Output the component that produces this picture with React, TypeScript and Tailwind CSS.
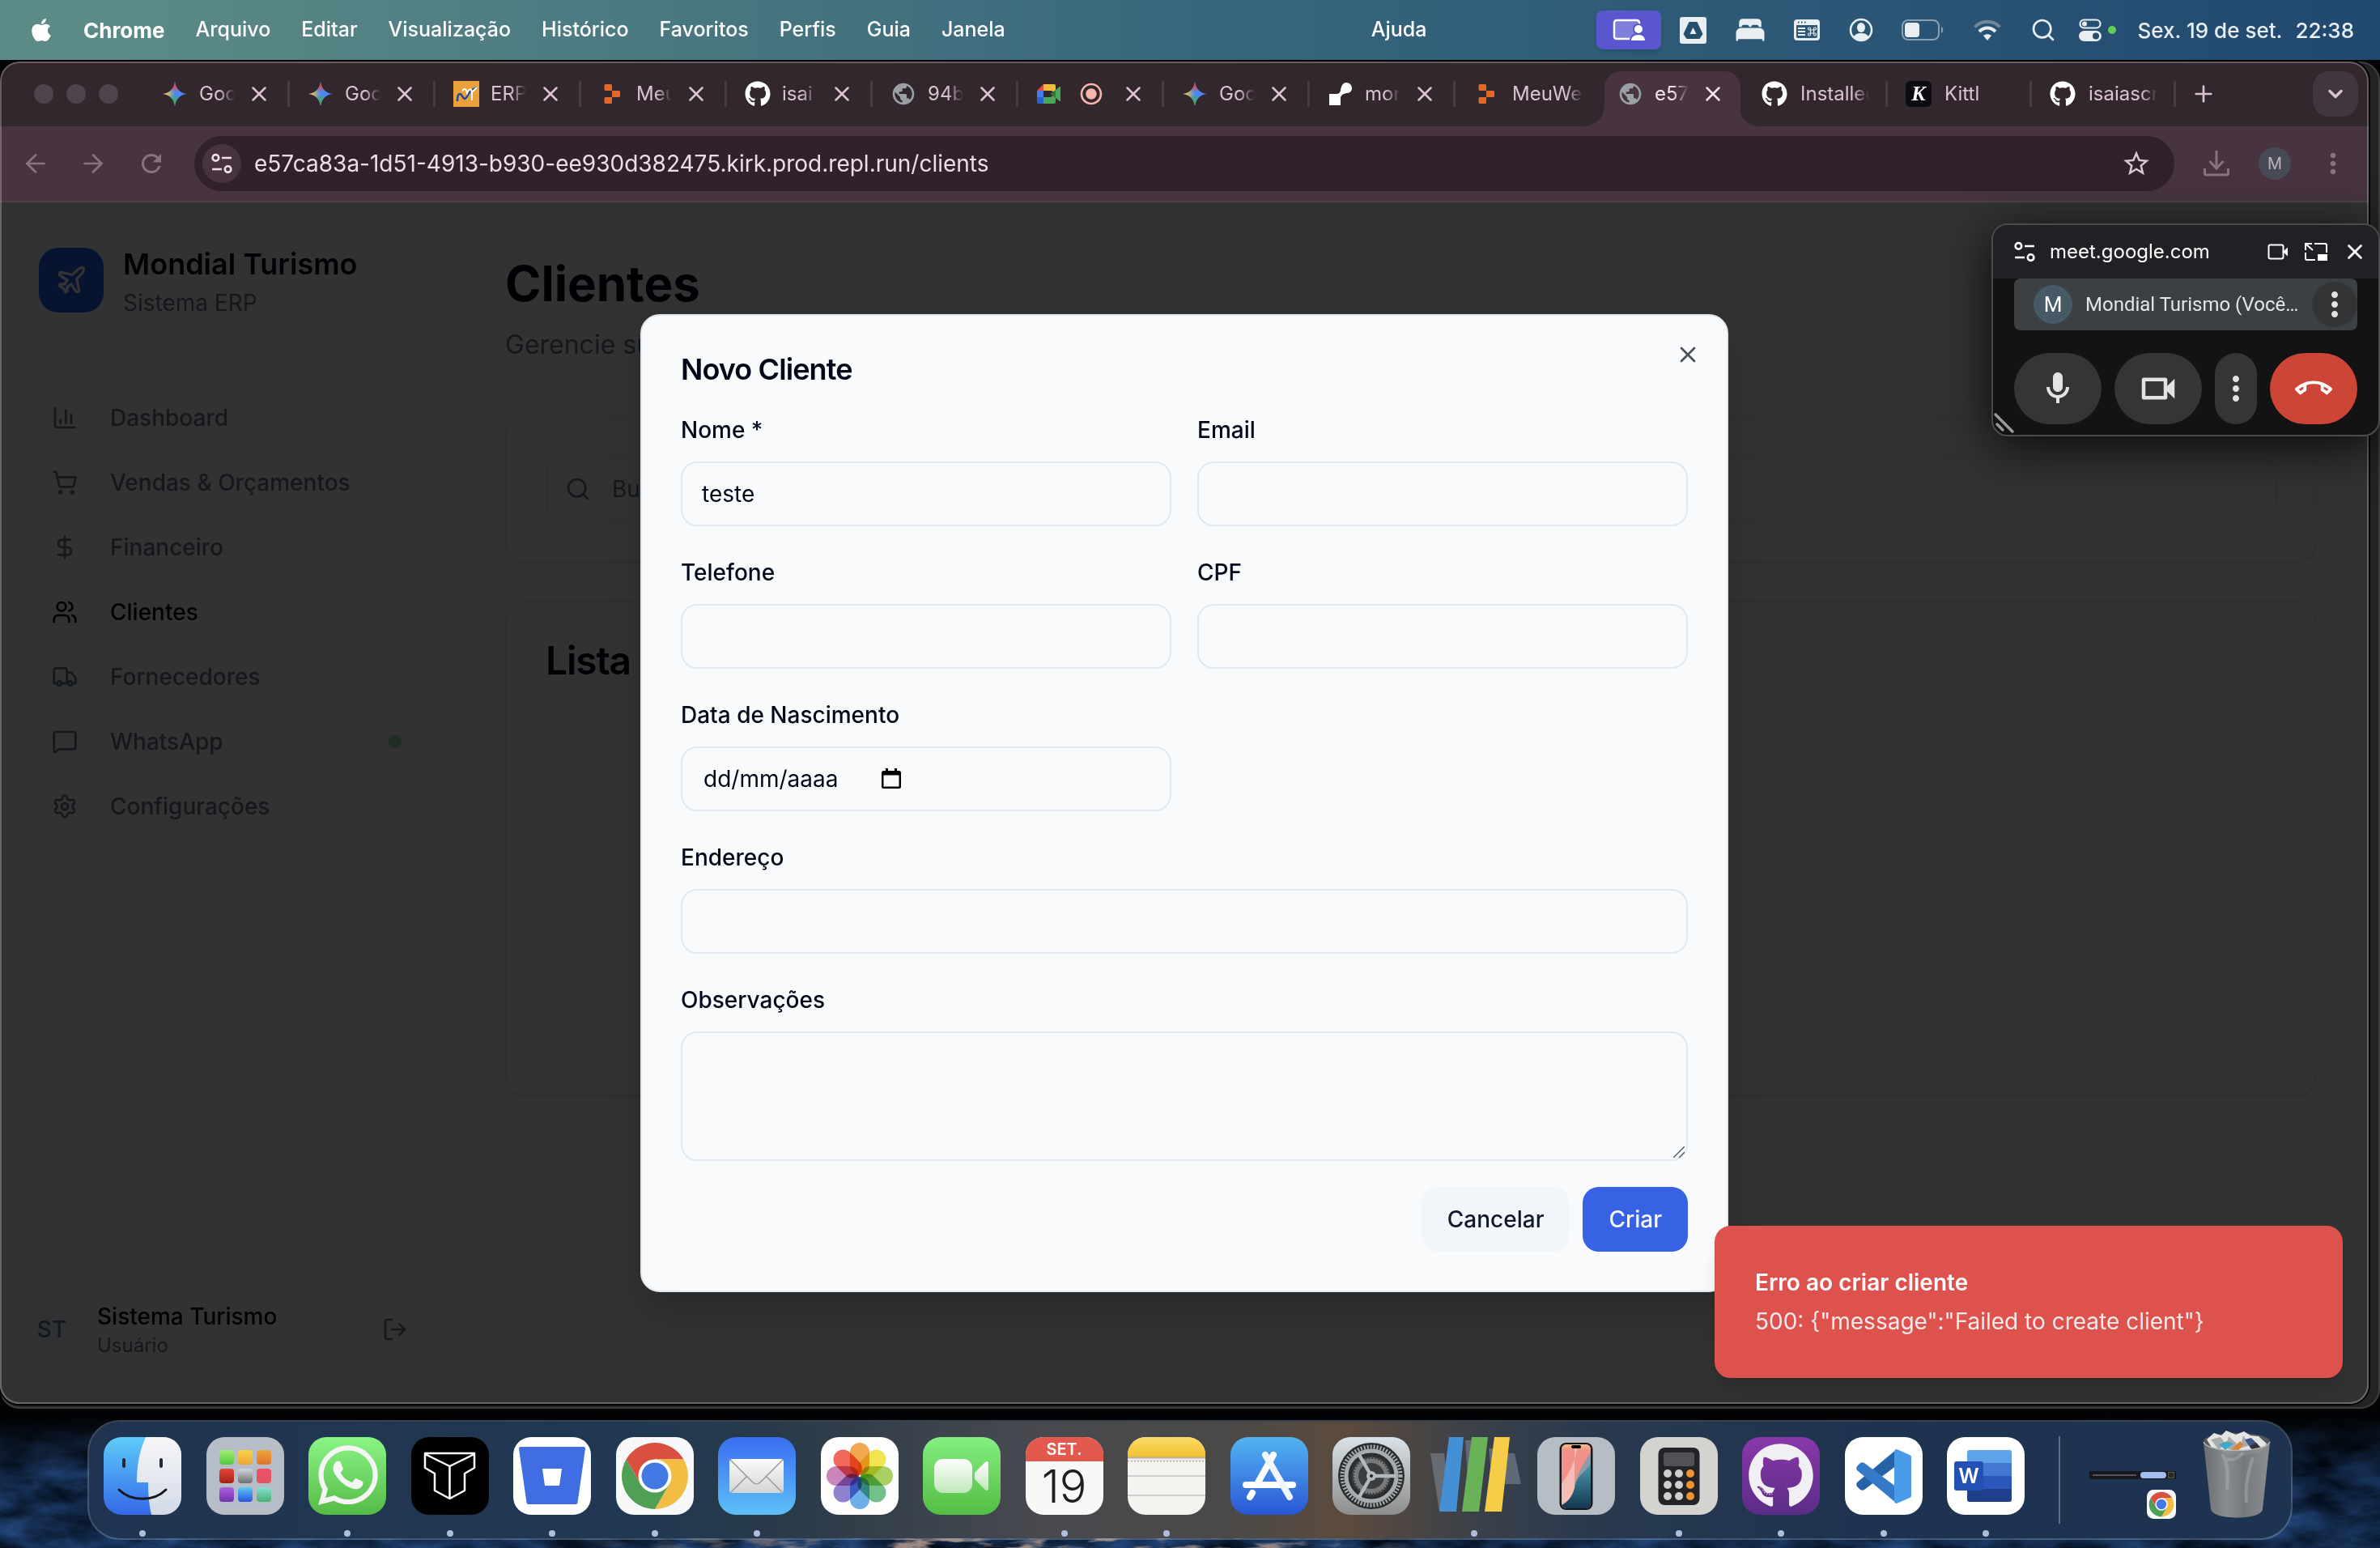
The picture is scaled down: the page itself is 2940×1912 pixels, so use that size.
import React from "react";
import {
  ArrowLeft, ArrowRight, ChartColumn, ChevronDown, DollarSign, LogOut, MessageSquare,
  Plane, Plus, Search, Settings, ShoppingCart, Truck, Users, X,
} from "lucide-react";
import { MdMoreVert, MdOutlineCallEnd, MdOutlineMic, MdOutlineVideocam, MdPublic, MdRadioButtonChecked, MdRefresh, MdStarBorder } from "react-icons/md";
import { FaApple, FaGithub, FaWhatsapp } from "react-icons/fa";
import { IoBed } from "react-icons/io5";

/* ---------- Menu bar ---------- */

const menus = ["Arquivo", "Editar", "Visualização", "Histórico", "Favoritos", "Perfis", "Guia", "Janela"];

function MenuBar() {
  return (
    <header className="relative flex h-[74px] shrink-0 items-center bg-linear-to-r from-[#5c8a86] from-5% via-[#38677c] via-50% to-[#214870] pr-8 pl-9 text-[25px] font-medium text-white">
      <button aria-label="Apple" className="flex w-[30px] shrink-0 justify-center">
        <FaApple size={32} />
      </button>
      <nav className="ml-[37px] flex items-center gap-[38px]">
        <button className="text-[26px] font-bold">Chrome</button>
        {menus.map((m) => (
          <button key={m}>{m}</button>
        ))}
      </nav>
      <div className="flex flex-1 justify-end pr-[210px]">
        <button>Ajuda</button>
      </div>
      <div className="flex items-center text-[#e8eef2]">
        <button aria-label="Compartilhamento de tela" className="flex h-12 w-20 items-center justify-center rounded-lg bg-[#5956cf] shadow-md">
          <svg width="42" height="28" viewBox="0 0 42 28" fill="none">
            <rect x="3" y="2" width="31" height="23" rx="3" fill="#807fdc" stroke="#fff" strokeWidth="2.500" />
            <circle cx="33" cy="13" r="6" fill="#fff" stroke="#5956cf" strokeWidth="2" />
            <path d="M23 28c0-6 4-9 10-9s9 3 9 9z" fill="#fff" stroke="#5956cf" strokeWidth="2" />
          </svg>
        </button>
        <svg className="ml-[23px]" width="33" height="33" viewBox="0 0 33 33">
          <rect width="33" height="33" rx="3" fill="#e8eef2" />
          <path d="M11.500 6h10l7 15-4 6h-16l-4-6z" fill="#25506c" />
          <path d="M16.500 13l4 8h-8z" fill="#e8eef2" />
        </svg>
        <IoBed className="ml-[34px]" size={40} />
        <svg className="ml-[34px]" width="32" height="26" viewBox="0 0 32 26">
          <path fillRule="evenodd" fill="currentColor" d="M4 0h24a4 4 0 0 1 4 4v18a4 4 0 0 1-4 4H4a4 4 0 0 1-4-4V4a4 4 0 0 1 4-4zM3 7v14a2 2 0 0 0 2 2h22a2 2 0 0 0 2-2V7z" />
          <path d="M5 3.500h1.500M9 3.500h1.500M13 3.500h1.500" stroke="#25506c" strokeWidth="2" />
          <path d="M5 11h9M5 15h9M5 19h9" stroke="currentColor" strokeWidth="2" />
          <path d="M20.500 13h4v4h-4zM20.500 13h-1.500a1.500 1.500 0 1 1 1.500-1.500zM24.500 13v-1.500a1.500 1.500 0 1 1 1.500 1.500zM20.500 17v1.500a1.500 1.500 0 1 1-1.500-1.500zM24.500 17h1.500a1.500 1.500 0 1 1-1.500 1.500z" fill="none" stroke="currentColor" strokeWidth="1.200" />
        </svg>
        <svg className="ml-9" width="30" height="30" viewBox="0 0 30 30">
          <circle cx="15" cy="15" r="13" fill="none" stroke="currentColor" strokeWidth="2.500" />
          <ellipse cx="15" cy="12" rx="5" ry="6" fill="currentColor" />
          <path d="M5.500 24c2-4 5-5 9.500-5s7.500 1 9.500 5c-3 3-6 4-9.500 4s-6.500-1-9.500-4z" fill="currentColor" />
        </svg>
        <svg className="ml-[35px]" width="52" height="26" viewBox="0 0 52 26">
          <rect x="1" y="1" width="45" height="24" rx="7" fill="none" stroke="currentColor" strokeOpacity=".5" strokeWidth="2" />
          <rect x="4" y="4" width="18" height="18" rx="4" fill="currentColor" />
          <path d="M49 9c3 1 3 7 0 8z" fill="currentColor" fillOpacity=".5" />
        </svg>
        <svg className="ml-9" width="36" height="26" viewBox="0 0 36 26" fill="none" stroke="currentColor" strokeWidth="4">
          <path d="M2.500 9.500C11 .5 25 .5 33.500 9.500" strokeOpacity=".35" />
          <path d="M8 15c6-6 14-6 20 0" />
          <path d="M18 26l-5-6c3-2.500 7-2.500 10 0z" fill="currentColor" stroke="none" />
        </svg>
        <Search className="ml-[35px]" size={32} strokeWidth={2} />
        <svg className="ml-7" width="28" height="28" viewBox="0 0 28 28">
          <rect x="1.500" y="1.500" width="25" height="10" rx="5" fill="none" stroke="currentColor" strokeWidth="2.200" />
          <circle cx="7" cy="6.500" r="3" fill="currentColor" />
          <rect x="0" y="15" width="28" height="13" rx="6.500" fill="currentColor" />
          <circle cx="21" cy="21.500" r="4" fill="#25506c" />
        </svg>
        <span className="ml-2 size-[10px] rounded-full bg-[#62d054]" />
        <span className="ml-[26px] text-[26px]">Sex. 19 de set.</span>
        <span className="ml-4 text-[26px]">22:38</span>
      </div>
    </header>
  );
}

/* ---------- Favicons ---------- */

function Gemini() {
  return (
    <svg width="32" height="32" viewBox="0 0 32 32">
      <defs>
        <radialGradient id="gm-r" gradientUnits="userSpaceOnUse" cx="16" cy="1" r="13">
          <stop offset=".4" stopColor="#e5484d" />
          <stop offset="1" stopColor="#e5484d" stopOpacity="0" />
        </radialGradient>
        <radialGradient id="gm-y" gradientUnits="userSpaceOnUse" cx="1" cy="16" r="15">
          <stop offset=".3" stopColor="#f5c33b" />
          <stop offset="1" stopColor="#f5c33b" stopOpacity="0" />
        </radialGradient>
        <radialGradient id="gm-g" gradientUnits="userSpaceOnUse" cx="14" cy="31" r="15">
          <stop offset=".4" stopColor="#3fae5a" />
          <stop offset="1" stopColor="#3fae5a" stopOpacity="0" />
        </radialGradient>
      </defs>
      {["#4a86f5", "url(#gm-y)", "url(#gm-g)", "url(#gm-r)"].map((f) => (
        <path key={f} fill={f} d="M16 1c1 8.500 6.500 14 15 15-8.500 1-14 6.500-15 15-1-8.500-6.500-14-15-15 8.500-1 14-6.500 15-15z" />
      ))}
    </svg>
  );
}

function Replit() {
  return (
    <svg width="32" height="32" viewBox="0 0 32 32" fill="#e2692c">
      <path d="M8 4h6.500A1.500 1.500 0 0 1 16 5.500V12H8a1.500 1.500 0 0 1-1.500-1.500v-5A1.500 1.500 0 0 1 8 4z" />
      <path d="M16 12h8.500a1.500 1.500 0 0 1 1.500 1.500v5a1.500 1.500 0 0 1-1.500 1.500H16z" />
      <path d="M8 20h8v6.500a1.500 1.500 0 0 1-1.500 1.500H8a1.500 1.500 0 0 1-1.500-1.500v-5A1.500 1.500 0 0 1 8 20z" />
    </svg>
  );
}

function MundoIcon() {
  return (
    <svg width="32" height="32" viewBox="0 0 32 32">
      <rect width="32" height="32" fill="#eba13a" />
      <path d="M5 25c0-5 1-9 3-9 3 0 3 5 6 6 3 0 5-9 9-11l6-3" fill="none" stroke="#1d4a9c" strokeWidth="2.500" />
      <path d="M11 12c4-4 5-1 6 3 2-5 5-7 6-1v10M24 13l5-5" fill="none" stroke="#fff" strokeWidth="2" />
    </svg>
  );
}

function MeetIcon() {
  return (
    <svg width="32" height="32" viewBox="0 0 32 32">
      <path d="M1 12l8-8v8z" fill="#e04a3f" />
      <path d="M1 12h8v8H1z" fill="#3f7de8" />
      <path d="M1 20h8v8H3a2 2 0 0 1-2-2z" fill="#2a62cf" />
      <path d="M9 4h13a2 2 0 0 1 2 2v8l-6-2H9z" fill="#f3bb3c" />
      <path d="M9 20h9l6-4v10a2 2 0 0 1-2 2H9z" fill="#4ba657" />
      <path d="M18 16l11-9c1 0 1 0 1 1v16c0 1 0 1-1 1z" fill="#4ba657" />
      <path d="M18 16l6-5v10z" fill="#2c7a3c" />
    </svg>
  );
}

function MondayShape() {
  return (
    <svg width="32" height="32" viewBox="0 0 32 32" fill="#fff">
      <path d="M2 16h8c4 0 6-2 6-5 1-5 3-9 7-9s7 3 7 7-3 6-7 6c-4 1-7 3-7 6v9H2z" />
    </svg>
  );
}

function KittlIcon() {
  return (
    <span className="flex size-8 items-center justify-center rounded-md bg-[#0b0c12] font-['Liberation_Serif',serif] text-[26px] leading-none font-bold text-white italic">K</span>
  );
}

function Globe() {
  return <MdPublic size={34} className="text-[#9aa0a6]" />;
}

function GitHubIcon() {
  return <FaGithub size={32} className="text-white" />;
}

/* ---------- Browser chrome ---------- */

type Tab = { icon: () => React.ReactElement; label?: string; close?: boolean; recording?: boolean; active?: boolean; narrow?: boolean; last?: boolean };

const tabs: Tab[] = [
  { icon: Gemini, label: "Goo", close: true },
  { icon: Gemini, label: "Goo", close: true },
  { icon: MundoIcon, label: "ERP", close: true },
  { icon: Replit, label: "Meu", close: true },
  { icon: GitHubIcon, label: "isai", close: true },
  { icon: Globe, label: "94b", close: true },
  { icon: MeetIcon, recording: true, close: true },
  { icon: Gemini, label: "Goo", close: true },
  { icon: MondayShape, label: "mon", close: true },
  { icon: Replit, label: "MeuWe", last: true },
  { icon: Globe, label: "e57", close: true, active: true },
  { icon: GitHubIcon, label: "Installed", narrow: true },
  { icon: KittlIcon, label: "Kittl", narrow: true },
  { icon: GitHubIcon, label: "isaiascr", narrow: true },
];

const flare = "absolute bottom-0 size-6";

function TabItem({ tab }: { tab: Tab }) {
  const Icon = tab.icon;
  const body = (
    <>
      <span className="flex size-8 shrink-0 items-center justify-center"><Icon /></span>
      {tab.recording ? (
        <span className="flex flex-1 justify-center text-[#f5b5a8]"><MdRadioButtonChecked size={32} /></span>
      ) : (
        <span className="min-w-0 flex-1 overflow-hidden whitespace-nowrap [mask-image:linear-gradient(to_right,black_calc(100%-20px),transparent)]">{tab.label}</span>
      )}
      {tab.close && (
        <button aria-label="Fechar guia" className="flex size-8 shrink-0 items-center justify-center">
          <X size={30} strokeWidth={2} />
        </button>
      )}
    </>
  );
  if (tab.active) {
    return (
      <div role="tab" aria-selected="true" className="relative mt-3 flex h-[68px] w-[176px] shrink-0 px-1 text-[#f3e3ec]">
        <span className={`${flare} -left-5 bg-[radial-gradient(circle_at_0_0,transparent_23px,#473440_24px)]`} />
        <span className={`${flare} -right-[18px] bg-[radial-gradient(circle_at_100%_0,transparent_23px,#473440_24px)]`} />
        <div className="flex min-w-0 flex-1 items-center gap-[14px] rounded-t-[20px] bg-[#473440] pr-[18px] pb-3 pl-4">{body}</div>
      </div>
    );
  }
  return (
    <div role="tab" aria-selected="false" className={`flex h-full shrink-0 items-center ${tab.narrow ? "w-[178px]" : "w-[180px]"}`}>
      <div className={`flex min-w-0 flex-1 items-center pl-[22px] ${tab.close ? "gap-[14px] pr-[19px]" : "gap-4 pr-5"}`}>{body}</div>
      <span className={`h-8 w-[3px] rounded-full ${tab.last ? "" : "bg-[#473c43]"}`} />
    </div>
  );
}

function TuneIcon({ size }: { size: number }) {
  return (
    <svg width={size} height={size} viewBox="0 0 24 24" fill="none" stroke="currentColor" strokeWidth="2.400">
      <circle cx="5" cy="5.500" r="3.500" />
      <path d="M12 5.500h11M1 18.500h11" />
      <circle cx="19" cy="18.500" r="3.500" />
    </svg>
  );
}

function BrowserChrome() {
  return (
    <div className="shrink-0">
      <div className="flex h-20 bg-[#33272e] pr-[13px] text-[24px] text-[#dcc3d0]">
        <div className="flex w-[178px] shrink-0 items-center gap-4 pl-[42px]">
          {["Fechar", "Minimizar", "Ampliar"].map((l) => (
            <button key={l} aria-label={l} className="size-6 rounded-full bg-[#4e444b]" />
          ))}
        </div>
        <div role="tablist" className="flex">
          {tabs.map((t, i) => (
            <TabItem key={i} tab={t} />
          ))}
        </div>
        <button aria-label="Nova guia" className="ml-4 flex w-9 items-center justify-center"><Plus size={32} strokeWidth={2} /></button>
        <button aria-label="Pesquisar guias" className="mt-3 ml-auto flex size-14 items-center justify-center rounded-[20px] bg-[#413640]">
          <ChevronDown size={28} strokeWidth={3} />
        </button>
      </div>
      <div className="flex h-[94px] items-center border-b-2 border-[#4c4248] bg-[#473440] pr-6 text-[#86757f]">
        <button aria-label="Voltar" className="ml-[26px]"><ArrowLeft size={36} strokeWidth={1.800} /></button>
        <button aria-label="Avançar" className="ml-[35px]"><ArrowRight size={36} strokeWidth={1.800} /></button>
        <button aria-label="Recarregar" className="ml-[36px]"><MdRefresh size={36} /></button>
        <div className="ml-[35px] flex h-[68px] flex-1 items-center rounded-full bg-[#31212b] pr-7 pl-[10px]">
          <button aria-label="Informações do site" className="flex size-12 items-center justify-center rounded-full bg-[#473440] text-[#eedfe8]"><TuneIcon size={26} /></button>
          <input aria-label="Endereço do site" defaultValue="e57ca83a-1d51-4913-b930-ee930d382475.kirk.prod.repl.run/clients" className="ml-4 flex-1 bg-transparent text-[28px] text-[#ecdde6] outline-none" />
          <button aria-label="Favoritar" className="text-[#d8c8d2]"><MdStarBorder size={38} /></button>
        </div>
        <button aria-label="Downloads" className="ml-9">
          <svg width="32" height="32" viewBox="0 0 32 32" fill="none" stroke="currentColor" strokeWidth="3">
            <path d="M16 0v21M7.500 13l8.500 9 8.500-9M1.500 22v6a2 2 0 0 0 2 2h25a2 2 0 0 0 2-2v-6" />
          </svg>
        </button>
        <button aria-label="Perfil" className="ml-9 flex size-10 items-center justify-center rounded-full bg-[#484a56] text-[20px] text-[#b9b4be]">M</button>
        <button aria-label="Mais" className="ml-8"><MdMoreVert size={40} /></button>
      </div>
    </div>
  );
}

/* ---------- ERP page ---------- */

const navItems = [
  { icon: ChartColumn, label: "Dashboard" },
  { icon: ShoppingCart, label: "Vendas & Orçamentos" },
  { icon: DollarSign, label: "Financeiro" },
  { icon: Users, label: "Clientes", active: true },
  { icon: Truck, label: "Fornecedores" },
  { icon: MessageSquare, label: "WhatsApp", dot: true },
  { icon: Settings, label: "Configurações" },
];

function Sidebar() {
  return (
    <aside className="flex w-[560px] shrink-0 flex-col pb-6">
      <div className="flex items-center gap-6 border-b-2 border-[#e2e8f0] p-12">
        <span className="flex size-20 items-center justify-center rounded-3xl bg-[#2563eb] text-white"><Plane size={40} /></span>
        <div>
          <h1 className="text-[36px] leading-[56px] font-semibold">Mondial Turismo</h1>
          <p className="text-[28px] leading-10 text-[#64748b]">Sistema ERP</p>
        </div>
      </div>
      <nav className="flex flex-1 flex-col p-8">
        {navItems.map(({ icon: Icon, label, active, dot }) => (
          <a key={label} href="#" className={`flex h-20 items-center gap-10 px-8 text-[28px] font-medium ${active ? "text-[#020817]" : "text-[#64748b]"}`}>
            <Icon size={32} />
            {label}
            {dot && <span className="ml-auto size-4 rounded-full bg-[#9fe0bb]" />}
          </a>
        ))}
      </nav>
      <div className="flex items-center border-t-2 border-[#e2e8f0] p-8">
        <span className="flex size-16 items-center justify-center rounded-full bg-[#eef3f8] text-[28px] font-medium text-[#64748b]">ST</span>
        <div className="ml-6">
          <p className="text-[28px] leading-10 font-medium">Sistema Turismo</p>
          <p className="text-[24px] leading-8 text-[#64748b]">Usuário</p>
        </div>
        <button aria-label="Sair" className="mr-6 ml-auto text-[#64748b]"><LogOut size={32} /></button>
      </div>
    </aside>
  );
}

function ClientsPage() {
  return (
    <main className="flex-1 p-16">
      <h2 className="text-[60px] leading-[72px] font-bold">Clientes</h2>
      <p className="mt-4 text-[32px] leading-12 text-[#64748b]">Gerencie sua base</p>
      <section className="mt-16 rounded-3xl border-2 border-[#e2e8f0] p-12 shadow-sm">
        <label className="flex h-20 items-center gap-[26px] rounded-[20px] border-2 border-[#e2e8f0] px-[22px] text-[#64748b]">
          <Search size={32} />
          <input aria-label="Buscar" placeholder="Buscar" className="flex-1 bg-transparent text-[28px] outline-none placeholder:text-[#64748b]" />
        </label>
      </section>
      <section className="mt-12 h-[612px] rounded-3xl border-2 border-[#e2e8f0] p-12 shadow-sm">
        <h3 className="text-[48px] leading-12 font-semibold tracking-tight">Lista</h3>
      </section>
    </main>
  );
}

const fieldBox = "block h-20 w-full rounded-[20px] border-2 border-[#e2e8f0] bg-[#f9fafc] px-6 text-[28px] outline-none";
const labelText = "mb-[14px] block text-[28px] leading-[50px] font-medium";

function Field({ id, label, value, wide }: { id: string; label: string; value?: string; wide?: boolean }) {
  return (
    <div className={wide ? "col-span-2" : ""}>
      <label htmlFor={id} className={labelText}>{label}</label>
      <input id={id} defaultValue={value} className={fieldBox} />
    </div>
  );
}

function NewClientDialog() {
  return (
    <div role="dialog" aria-labelledby="dlg-title" className="relative w-[1344px] rounded-3xl border-2 border-[#e2e8f0] bg-[#f9fafc] p-12 shadow-2xl">
      <h2 id="dlg-title" className="text-[36px] leading-9 font-semibold tracking-tight">Novo Cliente</h2>
      <form className="mt-8 grid grid-cols-2 gap-8">
        <Field id="nome" label="Nome *" value="teste" />
        <Field id="email" label="Email" />
        <Field id="telefone" label="Telefone" />
        <Field id="cpf" label="CPF" />
        <div>
          <label htmlFor="nascimento" className={labelText}>Data de Nascimento</label>
          <div className="flex h-20 items-center rounded-[20px] border-2 border-[#e2e8f0] px-6">
            <input id="nascimento" defaultValue="dd/mm/aaaa" className="w-[222px] bg-transparent pl-[2px] text-[28px] outline-none" />
            <button type="button" aria-label="Abrir calendário">
              <svg width="24" height="28" viewBox="0 0 24 28">
                <path fillRule="evenodd" d="M5 1h3v3h8V1h3v3h2.500A2.500 2.500 0 0 1 24 6.500v17a2.500 2.500 0 0 1-2.500 2.500h-19A2.500 2.500 0 0 1 0 23.500v-17A2.500 2.500 0 0 1 2.500 4H5zM2.500 9.500v14h19v-14z" />
              </svg>
            </button>
          </div>
        </div>
        <Field id="endereco" label="Endereço" wide />
        <div className="col-span-2">
          <label htmlFor="obs" className={labelText}>Observações</label>
          <div className="relative">
            <textarea id="obs" className="block h-40 w-full resize-none rounded-[20px] border-2 border-[#e2e8f0] bg-[#f9fafc] px-6 py-4 text-[28px] outline-none" />
            <svg className="absolute right-1 bottom-1" width="14" height="14" viewBox="0 0 14 14" stroke="#5b5f66" strokeWidth="1.500">
              <path d="M0 14L14 0M7 14l7-7" />
            </svg>
          </div>
        </div>
        <div className="col-span-2 flex justify-end gap-4 text-[28px] font-medium">
          <button type="button" className="h-20 rounded-[20px] bg-[#f2f5fa] px-8 text-[#0f172a]">Cancelar</button>
          <button type="submit" className="h-20 rounded-[20px] bg-[#3662e3] px-8 text-[#f8fafc]">Criar</button>
        </div>
      </form>
      <button aria-label="Fechar" className="absolute top-8 right-8 opacity-70"><X size={32} /></button>
    </div>
  );
}

function ErpPage() {
  return (
    <div className="relative flex flex-1 overflow-hidden bg-[#fafbfd] text-[#020817]">
      <Sidebar />
      <ClientsPage />
      <div className="absolute inset-0 grid place-items-center bg-black/80">
        <NewClientDialog />
      </div>
      <div role="alert" className="absolute right-8 bottom-8 w-[776px] rounded-[20px] border-2 border-[#dd524c] bg-[#dd524c] p-12 text-[28px] leading-10 text-[#f8fafc] shadow-xl">
        <p className="font-semibold">Erro ao criar cliente</p>
        <p className="mt-2 opacity-90">{'500: {"message":"Failed to create client"}'}</p>
      </div>
    </div>
  );
}

/* ---------- Floating call window ---------- */

const callBtn = "flex h-[88px] items-center justify-center bg-[#333537]";

function CallWindow() {
  return (
    <section aria-label="Chamada" className="absolute top-[276px] right-0 w-[480px] overflow-hidden rounded-[20px] border-2 border-[#4a4b4c] bg-[#131313] shadow-[0_12px_60px_rgba(0,0,0,0.8)]">
      <div className="flex h-[66px] items-center bg-[#202124] pr-[14px] pl-[26px] text-white">
        <TuneIcon size={26} />
        <span className="ml-[18px] flex-1 text-[24px]">meet.google.com</span>
        <button aria-label="Voltar à guia com vídeo">
          <svg width="26" height="20" viewBox="0 0 26 20"><rect x="1.500" y="1.500" width="18" height="17" rx="2" fill="none" stroke="#fff" strokeWidth="2" /><path d="M19 10l6-5.500v11z" fill="#fff" /></svg>
        </button>
        <button aria-label="Voltar para a guia" className="ml-5">
          <svg width="28" height="22" viewBox="0 0 28 22" fill="none" stroke="#fff" strokeWidth="2">
            <path d="M12 1h13a2 2 0 0 1 2 2v9M1 12v7a2 2 0 0 0 2 2h10M1 9V1h8M1 1l9 8" />
            <rect x="17" y="15" width="10" height="6" fill="#fff" />
          </svg>
        </button>
        <button aria-label="Fechar janela" className="ml-[19px]"><X size={30} strokeWidth={2.200} /></button>
      </div>
      <div className="px-[26px] pb-[13px]">
        <div className="flex h-16 items-center rounded-lg bg-[#3c4043] pl-6 font-[Roboto,sans-serif]">
          <span className="flex size-12 items-center justify-center rounded-full bg-[#455a64] text-[26px] text-white">M</span>
          <span className="ml-4 flex-1 text-[24px] whitespace-nowrap text-[#e3e5e8]">Mondial Turismo (Você…</span>
          <button aria-label="Opções do participante" className="flex size-14 items-center justify-center rounded-full bg-[#333436] text-[#e3e3e3]"><MdMoreVert size={48} /></button>
        </div>
        <div className="mt-7 flex gap-4 text-[#e3e3e3]">
          <button aria-label="Microfone" className={`${callBtn} flex-1 rounded-[44px]`}><MdOutlineMic size={48} /></button>
          <button aria-label="Câmera" className={`${callBtn} flex-1 rounded-[44px]`}><MdOutlineVideocam size={54} /></button>
          <button aria-label="Mais opções" className={`${callBtn} w-[52px] rounded-[26px]`}><MdMoreVert size={48} /></button>
          <button aria-label="Sair da chamada" className="flex h-[88px] flex-1 items-center justify-center rounded-[44px] bg-[#cc4537] text-white"><MdOutlineCallEnd size={46} /></button>
        </div>
      </div>
      <svg className="absolute bottom-0 left-0" width="28" height="28" viewBox="0 0 28 28" stroke="#9a9a9a" strokeWidth="3.500" strokeLinecap="round"><path d="M3 3l21 21M5 15l7 7" /></svg>
    </section>
  );
}

/* ---------- Dock ---------- */

function Tile({ fill, children }: { fill: string; children?: React.ReactNode }) {
  return (
    <svg width="96" height="96" viewBox="0 0 96 96" className="overflow-visible">
      <rect width="96" height="96" rx="22" fill={fill} />
      {children}
    </svg>
  );
}

function Grad({ id, a, b }: { id: string; a: string; b: string }) {
  return (
    <linearGradient id={id} x1="0" y1="0" x2="0" y2="1">
      <stop stopColor={a} />
      <stop offset="1" stopColor={b} />
    </linearGradient>
  );
}

function Finder() {
  return (
    <svg width="96" height="96" viewBox="0 0 96 96">
      <defs>
        <Grad id="fd-b" a="#5ecbf9" b="#3468e8" />
        <Grad id="fd-w" a="#f6f6f8" b="#d3dae6" />
        <clipPath id="fd-c"><rect width="96" height="96" rx="22" /></clipPath>
      </defs>
      <g clipPath="url(#fd-c)">
        <rect width="96" height="96" fill="url(#fd-b)" />
        <path d="M52 0C44 18 41 36 41 56h14c0 14 1 28 4 40h37V0z" fill="url(#fd-w)" />
      </g>
      <path d="M25 28v8M71 28v8" stroke="#222b35" strokeWidth="4" strokeLinecap="round" />
      <path d="M19 65c15 15 43 15 58 0" fill="none" stroke="#15191f" strokeWidth="3" strokeLinecap="round" />
    </svg>
  );
}

const padColors = [["#a0f070", "#55c83c"], ["#f8d34c", "#eda535"], ["#eda53a", "#dd7430"], ["#e2493a", "#a81f18"], ["#d0d8de", "#6c6e70"], ["#f0506a", "#dd5560"], ["#b060e0", "#6f2fae"], ["#5cc8f8", "#2a55dd"], ["#88e0d8", "#48b070"]];

function Launchpad() {
  return (
    <Tile fill="#b6bdc6">
      {padColors.map(([a, b], i) => (
        <g key={a + b}>
          <defs><Grad id={`lp${i}`} a={a} b={b} /></defs>
          <rect x={16 + (i % 3) * 23} y={16 + Math.floor(i / 3) * 23} width="18" height="18" rx="4" fill={`url(#lp${i})`} />
        </g>
      ))}
    </Tile>
  );
}

function WhatsAppApp() {
  return (
    <Tile fill="url(#wa)">
      <defs><Grad id="wa" a="#8af486" b="#55bb45" /></defs>
      <FaWhatsapp x="7" y="5" size={84} color="#f4f5f4" />
    </Tile>
  );
}

function ShieldT() {
  return (
    <Tile fill="#000">
      <path d="M17 20h61v18l-12 7v21L47.500 76 29 66V45l-12-7zM17 21l30.500 15L78 21M47.500 36v40" fill="none" stroke="#fff" strokeWidth="2.500" strokeLinejoin="round" />
    </Tile>
  );
}

function Bitbucket() {
  return (
    <Tile fill="#fff">
      <path d="M9 12h78c1.500 0 2 1 2 2.500L79.500 81c-.3 1.500-1 2-2.500 2H19c-1.500 0-2.200-.5-2.500-2L7 14.500C7 13 7.500 12 9 12z" fill="#416de2" />
      <path d="M36 39h24l-3 21H39z" fill="#fff" />
    </Tile>
  );
}

function ChromeApp({ size = 96 }: { size?: number }) {
  return (
    <svg width={size} height={size} viewBox="-48 -48 96 96">
      <rect x="-48" y="-48" width="96" height="96" rx="22" fill="#f7f8f9" />
      <path d="M-35.500-20.500A41 41 0 0 1 35.500-20.500H0L-17.750 10.250z" fill="#d95040" />
      <path d="M35.500-20.500A41 41 0 0 1 0 41L17.750 10.250 0-20.500z" fill="#f2bd42" />
      <path d="M0 41A41 41 0 0 1-35.500-20.500L-17.750 10.250h35.500z" fill="#4f9f55" />
      <circle r="20.500" fill="#fff" />
      <circle r="16.500" fill="#4478e4" />
    </svg>
  );
}

function Mail() {
  return (
    <Tile fill="url(#ml)">
      <defs><Grad id="ml" a="#3a6df0" b="#5cc0f8" /><Grad id="ml2" a="#fafafa" b="#d5d5d5" /></defs>
      <rect x="14" y="27" width="67" height="42" rx="4" fill="url(#ml2)" />
      <path d="M16 68l19-19M79 68L60 49M15 28l27 27c4 4 7 4 11 0l27-27" fill="none" stroke="#9a9a9a" strokeWidth="1.500" />
    </Tile>
  );
}

const petals = ["#f2a03c", "#f3e23e", "#a3cd52", "#66bb80", "#5fa9ea", "#8375cc", "#c67ab6", "#f0594a"];

function Photos() {
  return (
    <Tile fill="#fdfdfd">
      {petals.map((c, i) => (
        <rect key={c} x="36" y="7" width="24" height="40" rx="12" fill={c} fillOpacity=".9" transform={`rotate(${i * 45} 48 48)`} className="mix-blend-multiply" />
      ))}
    </Tile>
  );
}

function FaceTime() {
  return (
    <Tile fill="url(#ft)">
      <defs><Grad id="ft" a="#84ee80" b="#54bd44" /><Grad id="ft2" a="#ffffff" b="#bfe8ba" /></defs>
      <rect x="14" y="27" width="47" height="42" rx="11" fill="url(#ft2)" />
      <path d="M64 44l13-13c2-2 4-1 4 1v32c0 2-2 3-4 1L64 52z" fill="url(#ft2)" />
    </Tile>
  );
}

function CalendarApp() {
  return (
    <span className="flex size-24 flex-col items-center overflow-hidden rounded-[22px] bg-[#f8f8f6]">
      <span className="w-full bg-[#e4594d] text-center text-[20px] leading-[30px] font-semibold text-white">SET.</span>
      <span className="text-[56px] leading-[62px] font-light text-[#1f1f1f]">19</span>
    </span>
  );
}

function Notes() {
  return (
    <svg width="96" height="96" viewBox="0 0 96 96">
      <defs><Grad id="nt" a="#fbdd68" b="#f3c02f" /><clipPath id="nt-c"><rect width="96" height="96" rx="22" /></clipPath></defs>
      <g clipPath="url(#nt-c)">
        <rect width="96" height="96" fill="#f4f3f0" />
        <rect width="96" height="25" fill="url(#nt)" />
        <path d="M0 25.500h96" stroke="#b9b09a" strokeWidth="2" />
        <path d="M0 29.500h96" stroke="#b8b8b8" strokeWidth="2" strokeDasharray="2 2" />
        <path d="M0 48h96M0 72h96" stroke="#cfcfd2" strokeWidth="2" />
      </g>
    </svg>
  );
}

function AppStore() {
  return (
    <Tile fill="url(#as)">
      <defs><Grad id="as" a="#51b4f0" b="#2b56d6" /></defs>
      <g stroke="#fff" strokeWidth="8" strokeLinecap="round">
        <path d="M19 59h58" />
        <path d="M53 22L34 56M27 69l-3 5" />
        <path d="M43 22l30 52" stroke="#f1f6ff" />
      </g>
    </Tile>
  );
}

function SettingsApp() {
  return (
    <Tile fill="url(#st)">
      <defs><Grad id="st" a="#d9e2e8" b="#8d8d8c" /></defs>
      <circle cx="48" cy="48" r="41" fill="#2a2c2e" />
      <circle cx="48" cy="48" r="36" fill="none" stroke="#a9acae" strokeWidth="5" strokeDasharray="2 2" />
      <circle cx="48" cy="48" r="31" fill="none" stroke="#a9acae" strokeWidth="5" />
      <circle cx="48" cy="48" r="23" fill="#77797b" stroke="#3a3c3e" strokeWidth="4" strokeDasharray="2 2" />
      <circle cx="48" cy="48" r="16" fill="#3b3d3f" />
      <path d="M48 48h30M48 48L33 22M48 48L33 74" stroke="#b6b9bb" strokeWidth="4.500" />
      <circle cx="48" cy="48" r="6" fill="#b6b9bb" />
      <circle cx="48" cy="48" r="2" fill="#222" />
    </Tile>
  );
}

function Books() {
  return (
    <svg width="96" height="96" viewBox="0 0 96 96" className="overflow-visible">
      <path d="M-6 20H11l8 72H5zM37 4l7 0-3 60zM66 14l9 0-3 60zM88 20h10l8 38H86z" fill="#8a93a0" fillOpacity=".5" />
      <path d="M17 0h18L26 92H5z" fill="#4390d4" />
      <path d="M45 0h20L54 92H33z" fill="#69b257" />
      <path d="M73 0h19L82 92H61z" fill="#f6cd48" />
    </svg>
  );
}

function PhoneApp() {
  return (
    <Tile fill="#b7bdc4">
      <defs><Grad id="ph" a="#f4c08a" b="#ee8f86" /><Grad id="ph2" a="#4a9ab0" b="#12344e" /><clipPath id="ph-c"><rect x="30" y="9" width="36" height="79" rx="6" /></clipPath></defs>
      <rect x="27.500" y="7" width="41" height="83" rx="8" fill="#17181a" />
      <g clipPath="url(#ph-c)">
        <rect x="30" y="9" width="36" height="79" fill="#f0918a" />
        <rect x="30" y="9" width="36" height="8" fill="url(#ph)" />
        <path d="M50 9C48 30 38 46 30 58v32h16V9z" fill="#f4cfc8" fillOpacity=".7" />
        <path d="M66 18C58 34 50 40 46 62l20-26z" fill="#8f9aa4" />
        <path d="M66 33C58 44 50 48 47 58 45 72 38 80 30 84v6h36z" fill="url(#ph2)" />
      </g>
      <rect x="42" y="10" width="12" height="4" rx="2" fill="#000" />
    </Tile>
  );
}

function CalcApp() {
  return (
    <Tile fill="#d5d3cf">
      <rect x="22.500" y="13" width="51" height="71" rx="8" fill="#232427" />
      <rect x="29" y="19" width="38" height="17" rx="3" fill="#505255" />
      {[45, 59, 73].map((cy) =>
        [34, 48, 62].map((cx) => <circle key={`${cx}-${cy}`} cx={cx} cy={cy} r="5" fill={cx === 62 ? "#ee9433" : "#cfcfcd"} />),
      )}
    </Tile>
  );
}

function GitHubApp() {
  return (
    <Tile fill="url(#gh)">
      <defs><Grad id="gh" a="#8a38ab" b="#5a2c86" /></defs>
      <FaGithub x="7" y="7" size={82} color="#f0eff4" />
    </Tile>
  );
}

function CodeApp() {
  return (
    <Tile fill="#fff">
      <path d="M64 15v20L24 65c-2 1-3 1-5 0l-4-4c-1-2-1-3 0-5z" fill="#2862a6" />
      <path d="M64 82V62L24 32c-2-1-3-1-5 0l-4 4c-1 2-1 3 0 5z" fill="#3579c9" />
      <path d="M64 82c-2 0-3-1-3-3V18c0-2 1-3 3-3l16 7c2 1 2 2 2 4v45c0 2 0 3-2 4z" fill="#4a9aea" />
    </Tile>
  );
}

function WordApp() {
  return (
    <Tile fill="#fff">
      <path d="M28 16h49a3 3 0 0 1 3 3v13H25V19a3 3 0 0 1 3-3z" fill="#5ea3ea" />
      <path d="M25 32h55v16H25z" fill="#4378d0" />
      <path d="M25 48h55v16H25z" fill="#2b57ba" />
      <path d="M25 64h55v13a3 3 0 0 1-3 3H28a3 3 0 0 1-3-3z" fill="#1f3f8c" />
      <rect x="9" y="30" width="36" height="36" rx="3" fill="#2350b4" />
      <text x="27" y="57" textAnchor="middle" fontFamily="Inter, sans-serif" fontWeight="600" fontSize="25" fill="#fff">W</text>
    </Tile>
  );
}

function Trash() {
  return (
    <svg width="84" height="110" viewBox="0 0 84 110">
      <defs>
        <linearGradient id="tr"><stop stopColor="#6f7274" /><stop offset=".35" stopColor="#8e9193" /><stop offset=".6" stopColor="#7a7d7f" /><stop offset="1" stopColor="#909395" /></linearGradient>
      </defs>
      <ellipse cx="42" cy="14" rx="41" ry="10" fill="#55585a" />
      <path d="M5 12L14 4l9 3 6-6 12 5 10-4 8 5 10 1 10 9-6 10-20 5-22-2-20-8z" fill="#e4e4e2" />
      <path d="M10 12l12-3 6 8-8 8zM32 8l10 9-4 9-10-4zM50 7l8 12-12 4z" fill="#a9abab" />
      <path d="M20 18l10-4 8 3-10 8z" fill="#46a8c8" />
      <path d="M36 24l10-10 4 4-8 10z" fill="#d8823a" />
      <path d="M52 12l8-2 8 8-8 6z" fill="#3f568c" />
      <path d="M58 20l8-4 6 6-10 4z" fill="#333" />
      <path d="M1 15c6 14 76 14 82 0L74 98c-1 14-62 14-64 0z" fill="url(#tr)" fillOpacity=".95" />
      <path d="M1 15c6 14 76 14 82 0" fill="none" stroke="#b8babb" strokeWidth="1.500" />
      <path d="M24 30c6 10 8 20 6 44M50 28c-6 8-14 10-20 8M62 34c-6 20-10 34-8 56" fill="none" stroke="#b5b8ba" strokeOpacity=".4" strokeWidth="4" />
    </svg>
  );
}

const apps: { name: string; icon: () => React.ReactElement; open?: boolean }[] = [
  { name: "Finder", icon: Finder, open: true },
  { name: "Launchpad", icon: Launchpad },
  { name: "WhatsApp", icon: WhatsAppApp, open: true },
  { name: "Terminal", icon: ShieldT, open: true },
  { name: "Bitbucket", icon: Bitbucket, open: true },
  { name: "Chrome", icon: () => <ChromeApp />, open: true },
  { name: "Mail", icon: Mail, open: true },
  { name: "Fotos", icon: Photos },
  { name: "FaceTime", icon: FaceTime },
  { name: "Calendário", icon: CalendarApp, open: true },
  { name: "Notas", icon: Notes, open: true },
  { name: "App Store", icon: AppStore },
  { name: "Ajustes", icon: SettingsApp },
  { name: "Livros", icon: Books, open: true },
  { name: "iPhone", icon: PhoneApp },
  { name: "Calculadora", icon: CalcApp, open: true },
  { name: "GitHub", icon: GitHubApp, open: true },
  { name: "Code", icon: CodeApp, open: true },
  { name: "Word", icon: WordApp, open: true },
];

function Dock() {
  return (
    <footer className="relative shrink-0 px-[108px] pt-5 pb-[10px]">
      <div className="flex h-[148px] rounded-[40px] border-2 border-[#8fa3b8]/40 bg-[linear-gradient(to_right,#1f3450_0%,#213852_25%,#2a3b49_32%,#48494f_43%,#4b4947_52%,#5c4b3d_57%,#3b4049_63%,#293a4e_68%,#1f3350_80%,#1d3350_100%)] bg-clip-padding pr-[25px] pl-[18px]">
        <div className="flex flex-1 justify-between pt-[19px]">
          {apps.map(({ name, icon: Icon, open }) => (
            <button key={name} aria-label={name} className="flex w-24 flex-col items-center">
              <Icon />
              {open && <span className="mt-[19px] size-2 rounded-full bg-[#aebfdb]" />}
            </button>
          ))}
        </div>
        <span className="mt-[18px] ml-[42px] h-[108px] w-[2px] bg-[#5d708a]" />
        <button aria-label="Janela minimizada" className="mt-[61px] ml-9 flex w-[107px] flex-col items-end self-start">
          <span className="flex h-[10px] w-full items-center justify-end gap-[2px] bg-[#17191c] pr-[2px]">
            <span className="mr-auto ml-1 h-[2px] w-[54px] bg-[#55575a]" />
            <span className="h-2 w-8 rounded-full bg-[#a3bdf2]" />
            <span className="h-2 w-2 border border-[#5d5a45] bg-[#26282a]" />
          </span>
          <span className="mt-[13px]"><ChromeApp size={36} /></span>
        </button>
        <button aria-label="Lixo" className="mt-[10px] ml-[33px] self-start"><Trash /></button>
      </div>
    </footer>
  );
}

/* ---------- Desktop ---------- */

function Wallpaper() {
  return (
    <svg className="absolute inset-0 h-full w-full" preserveAspectRatio="none" aria-hidden="true">
      <defs>
        <filter id="sea" x="0" y="0" width="100%" height="100%" colorInterpolationFilters="sRGB">
          <feTurbulence type="fractalNoise" baseFrequency="0.012 0.03" numOctaves="5" seed="7" />
          <feColorMatrix values="0.25 0 0 0 -0.05  0.45 0 0 0 -0.06  0.75 0 0 0 -0.08  0 0 0 0 1" />
        </filter>
        <filter id="foam" x="0" y="0" width="100%" height="100%" colorInterpolationFilters="sRGB">
          <feTurbulence type="fractalNoise" baseFrequency="0.02 0.09" numOctaves="4" seed="11" />
          <feColorMatrix values="0 0 0 0 0.62  0 0 0 0 0.55  0 0 0 0 0.52  5 0 0 0 -2.4" />
        </filter>
        <linearGradient id="foam-fade">
          <stop stopColor="#000" />
          <stop offset=".4" stopColor="#fff" />
          <stop offset=".8" stopColor="#fff" />
          <stop offset="1" stopColor="#000" />
        </linearGradient>
        <mask id="foam-mask">
          <rect x="24%" y="96%" width="36%" height="4%" fill="url(#foam-fade)" />
        </mask>
        <linearGradient id="dusk" x1="0" y1="0" x2="0" y2="1">
          <stop offset=".915" stopColor="#020305" />
          <stop offset=".955" stopColor="#020305" stopOpacity="0" />
        </linearGradient>
      </defs>
      <rect width="100%" height="100%" fill="#0c1a30" />
      <rect y="90%" width="100%" height="10%" filter="url(#sea)" />
      <g mask="url(#foam-mask)">
        <rect x="24%" y="96%" width="36%" height="4%" filter="url(#foam)" />
      </g>
      <rect width="100%" height="100%" fill="url(#dusk)" />
    </svg>
  );
}

export default function App() {
  return (
    <div className="relative flex h-screen flex-col overflow-hidden bg-black font-[Inter,sans-serif]">
      <Wallpaper />
      <MenuBar />
      <div className="relative mt-[2px] flex min-h-0 flex-1">
        <div className="absolute inset-x-0 top-0 -bottom-[6px] rounded-[24px] border-2 border-[#3d3e3e] bg-[#222323]" />
        <div className="relative mr-[14px] flex flex-1 flex-col overflow-hidden rounded-[24px] shadow-[0_0_0_2px_#000]">
          <BrowserChrome />
          <ErpPage />
          <div className="pointer-events-none absolute inset-0 rounded-[24px] border-2 border-white/25" />
        </div>
      </div>
      <Dock />
      <CallWindow />
    </div>
  );
}
